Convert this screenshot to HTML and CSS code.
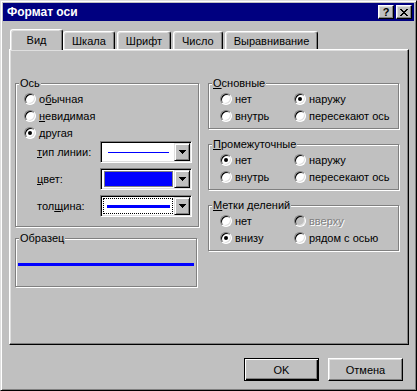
FILE: index.html
```html
<!DOCTYPE html>
<html lang="ru">
<head>
    <meta charset="UTF-8">
    <title>Формат оси</title>
    <link rel="stylesheet" href="styles.css">
</head>
<body>
    <div class="window">
        <div class="titlebar">
            <span class="title">Формат оси</span>
            <div class="title-buttons">
                <span class="tbtn help">?</span>
                <span class="tbtn close">
                    <svg width="8" height="7" viewBox="0 0 8 7" shape-rendering="crispEdges"><path d="M0 0h2v1H0z M6 0h2v1H6z M1 1h2v1H1z M5 1h2v1H5z M2 2h4v1H2z M3 3h2v1H3z M2 4h4v1H2z M1 5h2v1H1z M5 5h2v1H5z M0 6h2v1H0z M6 6h2v1H6z" fill="#000"/></svg>
                </span>
            </div>
        </div>

        <div class="dialog">
            <div class="tabs">
                <div class="tab active">Вид</div>
                <div class="tab">Шкала</div>
                <div class="tab">Шрифт</div>
                <div class="tab">Число</div>
                <div class="tab">Выравнивание</div>
            </div>

            <div class="panel">
                <div class="col col-left">
                    <div class="group axis">
                        <span class="legend">Ось</span>
                        <label class="radio-row"><span class="radio"></span>о<u>б</u>ычная</label>
                        <label class="radio-row"><span class="radio"></span><u>н</u>евидимая</label>
                        <label class="radio-row"><span class="radio checked"></span>другая</label>

                        <div class="field">
                            <span class="field-label"><u>т</u>ип линии:</span>
                            <div class="combo">
                                <div class="combo-value pad-line"><span class="line thin"></span></div>
                                <span class="combo-btn"><svg width="7" height="4" viewBox="0 0 7 4" shape-rendering="crispEdges"><path d="M0 0h7v1H0z M1 1h5v1H1z M2 2h3v1H2z M3 3h1v1H3z" fill="#000"/></svg></span>
                            </div>
                        </div>
                        <div class="field">
                            <span class="field-label"><u>ц</u>вет:</span>
                            <div class="combo">
                                <div class="combo-value"><span class="swatch"></span></div>
                                <span class="combo-btn"><svg width="7" height="4" viewBox="0 0 7 4" shape-rendering="crispEdges"><path d="M0 0h7v1H0z M1 1h5v1H1z M2 2h3v1H2z M3 3h1v1H3z" fill="#000"/></svg></span>
                            </div>
                        </div>
                        <div class="field">
                            <span class="field-label">тол<u>щ</u>ина:</span>
                            <div class="combo">
                                <div class="combo-value"><span class="focus"><span class="line thick"></span></span></div>
                                <span class="combo-btn"><svg width="7" height="4" viewBox="0 0 7 4" shape-rendering="crispEdges"><path d="M0 0h7v1H0z M1 1h5v1H1z M2 2h3v1H2z M3 3h1v1H3z" fill="#000"/></svg></span>
                            </div>
                        </div>
                    </div>

                    <div class="group sample">
                        <span class="legend">Образец</span>
                        <div class="sample-line"></div>
                    </div>
                </div>

                <div class="col col-right">
                    <div class="group ticks">
                        <span class="legend"><u>О</u>сновные</span>
                        <div class="options">
                            <label class="radio-row"><span class="radio"></span>нет</label>
                            <label class="radio-row"><span class="radio checked"></span>наружу</label>
                            <label class="radio-row"><span class="radio"></span>внутрь</label>
                            <label class="radio-row"><span class="radio"></span>пересекают ось</label>
                        </div>
                    </div>

                    <div class="group ticks">
                        <span class="legend"><u>П</u>ромежуточные</span>
                        <div class="options">
                            <label class="radio-row"><span class="radio checked"></span>нет</label>
                            <label class="radio-row"><span class="radio"></span>наружу</label>
                            <label class="radio-row"><span class="radio"></span>внутрь</label>
                            <label class="radio-row"><span class="radio"></span>пересекают ось</label>
                        </div>
                    </div>

                    <div class="group ticks">
                        <span class="legend"><u>М</u>етки делений</span>
                        <div class="options">
                            <label class="radio-row"><span class="radio"></span>нет</label>
                            <label class="radio-row disabled"><span class="radio"></span>вверху</label>
                            <label class="radio-row"><span class="radio checked"></span>внизу</label>
                            <label class="radio-row"><span class="radio"></span>рядом с осью</label>
                        </div>
                    </div>
                </div>
            </div>

            <div class="footer">
                <button class="btn default">OK</button>
                <button class="btn">Отмена</button>
            </div>
        </div>
    </div>
</body>
</html>
```

FILE: styles.css
```css
* {
    box-sizing: border-box;
}
body {
    margin: 0;
    font-family: "Liberation Sans", Arial, sans-serif;
    font-size: 11px;
    color: #000;
    background: #c0c0c0;
}
.window {
    width: 417px;
    height: 391px;
    background: #c0c0c0;
    border: 1px solid;
    border-color: #dfdfdf #000 #000 #dfdfdf;
    box-shadow: inset 1px 1px #fff, inset -1px -1px #808080;
    padding: 2px;
    display: flex;
    flex-direction: column;
}
.titlebar {
    height: 18px;
    background: #000080;
    color: #fff;
    display: flex;
    align-items: center;
    justify-content: space-between;
    padding: 0 2px 0 4px;
}
.title {
    font-weight: bold;
    font-size: 12px;
}
.title-buttons {
    display: flex;
    gap: 2px;
}
.tbtn {
    width: 16px;
    height: 14px;
    background: #c0c0c0;
    border: 1px solid;
    border-color: #fff #000 #000 #fff;
    box-shadow: inset -1px -1px #808080, inset 1px 1px #dfdfdf;
    display: flex;
    align-items: center;
    justify-content: center;
    color: #000;
}
.tbtn.help {
    font-weight: bold;
    font-size: 11px;
    line-height: 12px;
}
.dialog {
    flex: 1;
    padding: 8px 5px 0 6px;
    display: flex;
    flex-direction: column;
}
.tabs {
    display: flex;
    align-items: flex-end;
    height: 20px;
    padding-left: 3px;
    gap: 2px;
}
.tab {
    height: 18px;
    padding: 1px 8px 0;
    line-height: 16px;
    border: 1px solid;
    border-color: #fff #000 transparent #fff;
    border-bottom: none;
    border-radius: 3px 3px 0 0;
    box-shadow: inset -1px 0 #808080, inset 1px 1px #dfdfdf;
    background: #c0c0c0;
}
.tab.active {
    height: 21px;
    min-width: 53px;
    margin: 0 -2px -1px;
    padding: 2px 12px 0;
    text-align: center;
    z-index: 1;
}
.panel {
    width: 400px;
    height: 296px;
    border: 1px solid;
    border-color: #fff #000 #000 #fff;
    box-shadow: inset -1px -1px #808080, inset 1px 1px #dfdfdf;
    display: flex;
    gap: 9px;
    padding: 33px 0 0 5px;
}
.col-left {
    width: 184px;
}
.col-right {
    width: 191px;
}
.group {
    position: relative;
    border: 1px solid #808080;
    box-shadow: inset 1px 1px #fff, 1px 1px #fff;
}
.legend {
    position: absolute;
    top: -7px;
    left: 3px;
    padding: 0 1px;
    line-height: 13px;
    background: #c0c0c0;
}
.radio-row {
    display: flex;
    align-items: center;
    height: 17px;
    white-space: nowrap;
}
.radio {
    width: 12px;
    height: 12px;
    flex: none;
    margin-right: 3px;
    border-radius: 50%;
    border: 1px solid;
    border-color: #808080 #fff #fff #808080;
    box-shadow: inset 1px 1px #000, inset -1px -1px #dfdfdf;
    background: #fff;
    display: flex;
    align-items: center;
    justify-content: center;
}
.radio.checked::after {
    content: "";
    width: 4px;
    height: 4px;
    border-radius: 50%;
    background: #000;
}
.radio-row.disabled {
    color: #808080;
    text-shadow: 1px 1px #fff;
}
.radio-row.disabled .radio {
    background: #c0c0c0;
}
.axis {
    padding: 6px 6px 9px 8px;
}
.field {
    display: flex;
    align-items: center;
    height: 22px;
    padding-left: 13px;
    margin-top: 5px;
}
.radio-row + .field {
    margin-top: 0;
}
.field-label {
    width: 63px;
}
.combo {
    width: 92px;
    height: 22px;
    border: 1px solid;
    border-color: #808080 #fff #fff #808080;
    box-shadow: inset 1px 1px #000, inset -1px -1px #dfdfdf;
    background: #fff;
    padding: 1px;
    display: flex;
}
.combo-value {
    flex: 1;
    display: flex;
    align-items: center;
}
.pad-line {
    padding: 0 5px 0 6px;
}
.combo-btn {
    width: 16px;
    background: #c0c0c0;
    border: 1px solid;
    border-color: #dfdfdf #000 #000 #dfdfdf;
    box-shadow: inset 1px 1px #fff, inset -1px -1px #808080;
    display: flex;
    align-items: center;
    justify-content: center;
}
.line {
    flex: 1;
    background: #0000ff;
}
.line.thin {
    height: 1px;
}
.line.thick {
    height: 3px;
}
.swatch {
    flex: 1;
    align-self: stretch;
    margin: 1px 1px 1px 2px;
    border: 1px solid #808080;
    background: #0000ff;
}
.focus {
    flex: 1;
    align-self: stretch;
    margin: 1px;
    border: 1px dotted #000;
    display: flex;
    align-items: center;
    padding: 0 2px 0 3px;
}
.sample {
    width: 182px;
    height: 49px;
    margin-top: 11px;
    padding: 24px 0 0 2px;
}
.sample-line {
    width: 176px;
    height: 3px;
    background: #0000ff;
}
.ticks {
    height: 46px;
    padding: 6px 0 0 11px;
}
.ticks + .ticks {
    margin-top: 15px;
}
.options {
    display: grid;
    grid-template-columns: 74px auto;
}
.footer {
    display: flex;
    justify-content: flex-end;
    gap: 9px;
    padding: 13px 6px 0 0;
}
.btn {
    width: 75px;
    height: 23px;
    padding: 0;
    font: inherit;
    color: #000;
    background: #c0c0c0;
    border: 1px solid;
    border-color: #fff #000 #000 #fff;
    box-shadow: inset -1px -1px #808080, inset 1px 1px #dfdfdf;
}
.btn.default {
    border-color: #000;
    box-shadow: inset 1px 1px #fff, inset -1px -1px #000, inset -2px -2px #808080;
}
```
